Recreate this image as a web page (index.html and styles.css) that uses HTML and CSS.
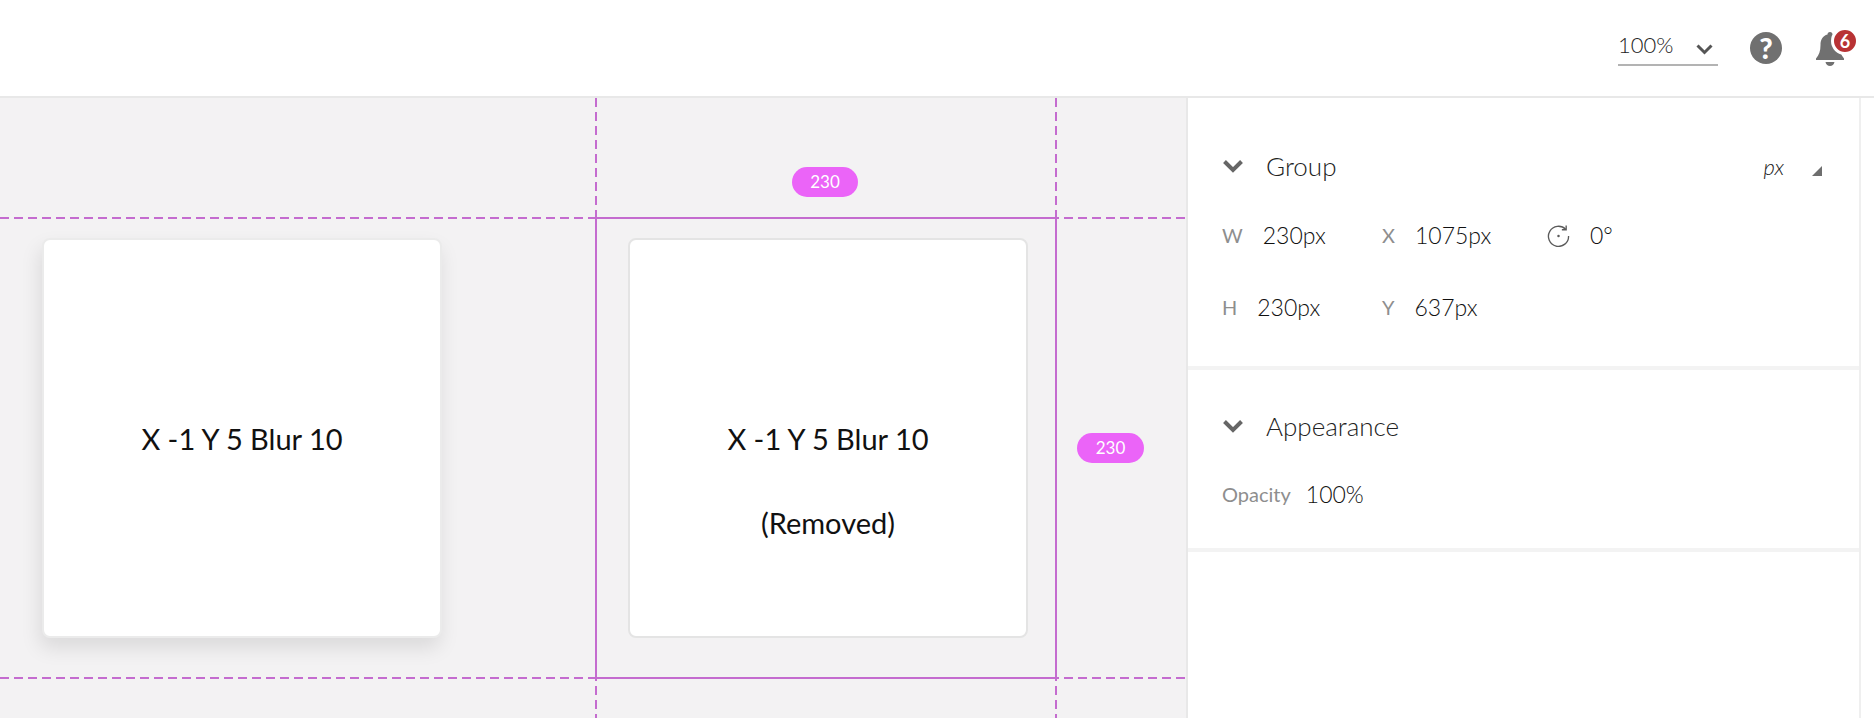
FILE: index.html
```html
<!DOCTYPE html>
<html>
<head>
    <title>Group</title>
    <link rel="stylesheet" href="styles.css">
</head>
<body>
    <header class="topbar">
        <div class="zoom-select">
            <span>100%</span>
            <svg class="zoom-arrow" viewBox="0 0 17 11"><path d="M1.500 1.500 8.500 8.500 15.500 1.500"/></svg>
        </div>
        <div class="help-icon">?</div>
        <div class="bell">
            <svg class="bell-icon" viewBox="0 0 28 34">
                <path d="M14 0c1.600 0 2.500 1.200 2.500 2.600 4.800 1.300 7 5.300 7 10.400 0 6 1.500 10 4.500 13.500v1.500H0v-1.500C3 23 4.500 19 4.500 13c0-5.100 2.200-9.100 7-10.400C11.500 1.200 12.400 0 14 0z"/>
                <path d="M9.500 30h9c-.5 2.400-2.300 4-4.500 4s-4-1.600-4.500-4z"/>
            </svg>
            <span class="bell-badge">6</span>
        </div>
    </header>

    <div class="workspace">
        <main class="canvas">
            <div class="card card-shadow">
                <p>X -1 Y 5 Blur 10</p>
            </div>
            <div class="card">
                <p>X -1 Y 5 Blur 10</p>
                <p>(Removed)</p>
            </div>

            <!-- selection guides -->
            <div class="guide guide-h guide-top"></div>
            <div class="guide guide-h guide-bottom"></div>
            <div class="guide guide-v guide-left"></div>
            <div class="guide guide-v guide-right"></div>
            <div class="selection"></div>
            <div class="size-pill pill-width">230</div>
            <div class="size-pill pill-height">230</div>
        </main>

        <aside class="panel">
            <section class="section section-group">
                <div class="section-head">
                    <svg class="chevron" viewBox="0 0 22 14"><path d="M2.500 2.500 11 11 19.500 2.500"/></svg>
                    <h2>Group</h2>
                    <span class="unit">px</span>
                    <span class="unit-corner"></span>
                </div>
                <div class="fields">
                    <div class="field"><span class="label">W</span><span class="value">230px</span></div>
                    <div class="field"><span class="label">X</span><span class="value">1075px</span></div>
                    <div class="field field-rotate">
                        <svg class="rotate-icon" viewBox="0 0 24 24">
                            <path d="M19.500 5.500A10.500 10.500 0 1 0 22.500 12.500"/>
                            <path d="M20 1.500v4.500h-4.500"/>
                            <circle cx="12" cy="12.500" r="1.300"/>
                        </svg>
                        <span class="value">0°</span>
                    </div>
                    <div class="field"><span class="label">H</span><span class="value">230px</span></div>
                    <div class="field"><span class="label">Y</span><span class="value">637px</span></div>
                </div>
            </section>
            <section class="section section-appearance">
                <div class="section-head">
                    <svg class="chevron" viewBox="0 0 22 14"><path d="M2.500 2.500 11 11 19.500 2.500"/></svg>
                    <h2>Appearance</h2>
                </div>
                <div class="field opacity-field"><span class="label">Opacity</span><span class="value">100%</span></div>
            </section>
        </aside>
    </div>
</body>
</html>
```

FILE: styles.css
```css
* {
    box-sizing: border-box;
}
html, body {
    height: 100%;
}
body {
    margin: 0;
    font-family: 'Lato', sans-serif;
    background-color: #fff;
    overflow: hidden;
    display: flex;
    flex-direction: column;
}

/* top bar */
.topbar {
    height: 98px;
    flex: none;
    border-bottom: 2px solid #e8e8e8;
    display: flex;
    justify-content: flex-end;
    align-items: flex-start;
    padding: 30px 18px 0 0;
}
.zoom-select {
    width: 100px;
    height: 36px;
    border-bottom: 2px solid #b3b3b3;
    display: flex;
    justify-content: space-between;
    align-items: flex-start;
    padding-right: 5px;
    font-size: 22px;
    font-weight: 300;
    line-height: 30px;
    color: #222;
}
.zoom-arrow {
    width: 17px;
    height: 11px;
    margin-top: 14px;
    fill: none;
    stroke: #555;
    stroke-width: 3;
}
.help-icon {
    width: 32px;
    height: 32px;
    margin: 2px 0 0 32px;
    border-radius: 50%;
    background-color: #707070;
    color: #fff;
    font-size: 29px;
    font-weight: 900;
    line-height: 32px;
    text-align: center;
}
.bell {
    position: relative;
    width: 40px;
    height: 36px;
    margin-left: 34px;
}
.bell-icon {
    display: block;
    width: 28px;
    height: 34px;
    margin-top: 2px;
    fill: #707070;
}
.bell-badge {
    position: absolute;
    top: -3px;
    left: 15px;
    width: 28px;
    height: 28px;
    border: 3px solid #fff;
    border-radius: 50%;
    background-color: #b83234;
    color: #fff;
    font-size: 18px;
    font-weight: 700;
    line-height: 22px;
    text-align: center;
}

.workspace {
    flex: 1;
    display: flex;
    min-height: 0;
}

/* canvas */
.canvas {
    position: relative;
    width: 1188px;
    flex: none;
    overflow: hidden;
    background-color: #f3f2f3;
    border-right: 2px solid #e8e8e8;
    display: flex;
    align-items: flex-start;
    gap: 186px;
    padding: 140px 0 0 42px;
}
.card {
    width: 400px;
    height: 400px;
    flex: none;
    background-color: #fff;
    border: 2px solid #e4e4e4;
    border-radius: 8px;
    display: flex;
    flex-direction: column;
    align-items: center;
    gap: 42px;
    padding-top: 178px;
    font-size: 29px;
    font-weight: 400;
    line-height: 42px;
    color: #111;
}
.card p {
    margin: 0;
}
.card-shadow {
    border-color: #ebebeb;
    box-shadow: -2px 10px 20px rgba(0, 0, 0, 0.1);
}

.guide {
    position: absolute;
}
.guide-h {
    left: 0;
    right: 0;
    height: 2px;
    background-image: repeating-linear-gradient(to right, #c46ccf 0, #c46ccf 9px, transparent 9px, transparent 14px);
}
.guide-v {
    top: 0;
    bottom: 0;
    width: 2px;
    background-image: repeating-linear-gradient(to bottom, #c46ccf 0, #c46ccf 9px, transparent 9px, transparent 14px);
}
.guide-top { top: 119px; }
.guide-bottom { top: 579px; }
.guide-left { left: 595px; }
.guide-right { left: 1055px; }
.selection {
    position: absolute;
    left: 595px;
    top: 119px;
    width: 462px;
    height: 462px;
    border: 2px solid #c46ccf;
}
.size-pill {
    position: absolute;
    height: 30px;
    border-radius: 15px;
    background-color: #eb64f8;
    color: #fff;
    font-size: 17px;
    font-weight: 400;
    line-height: 30px;
    text-align: center;
}
.pill-width {
    left: 792px;
    top: 69px;
    width: 66px;
}
.pill-height {
    left: 1077px;
    top: 335px;
    width: 67px;
}

/* properties panel */
.panel {
    width: 673px;
    flex: none;
    border-right: 2px solid #efefef;
    color: #3f3f3f;
}
.section {
    border-bottom: 4px solid #f3f3f3;
    padding: 0 0 0 34px;
}
.section-group {
    height: 272px;
    padding-top: 52px;
}
.section-appearance {
    height: 182px;
    padding-top: 40px;
}
.section-head {
    display: flex;
    align-items: center;
    height: 32px;
}
.section-head h2 {
    margin: 0 0 0 22px;
    font-size: 26px;
    font-weight: 300;
    color: #222;
}
.chevron {
    width: 22px;
    height: 14px;
    fill: none;
    stroke: #666;
    stroke-width: 4;
}
.unit {
    margin-left: auto;
    font-size: 22px;
    font-weight: 300;
    font-style: italic;
    color: #222;
}
.unit-corner {
    width: 0;
    height: 0;
    margin: 10px 37px 0 28px;
    border-left: 10px solid transparent;
    border-bottom: 10px solid #6e6e6e;
}
.fields {
    display: grid;
    grid-template-columns: 160px 165px auto;
    grid-auto-rows: 72px;
    margin-top: 17px;
}
.field {
    display: flex;
    align-items: center;
    gap: 20px;
}
.label {
    font-size: 20px;
    font-weight: 400;
    color: #8e8e8e;
}
.value {
    font-size: 23px;
    font-weight: 300;
    color: #111;
}
.rotate-icon {
    width: 23px;
    height: 23px;
    fill: none;
    stroke: #5a5a5a;
    stroke-width: 1.400;
}
.rotate-icon circle {
    fill: #5a5a5a;
    stroke: none;
}
.opacity-field {
    margin-top: 38px;
    gap: 15px;
}
```
